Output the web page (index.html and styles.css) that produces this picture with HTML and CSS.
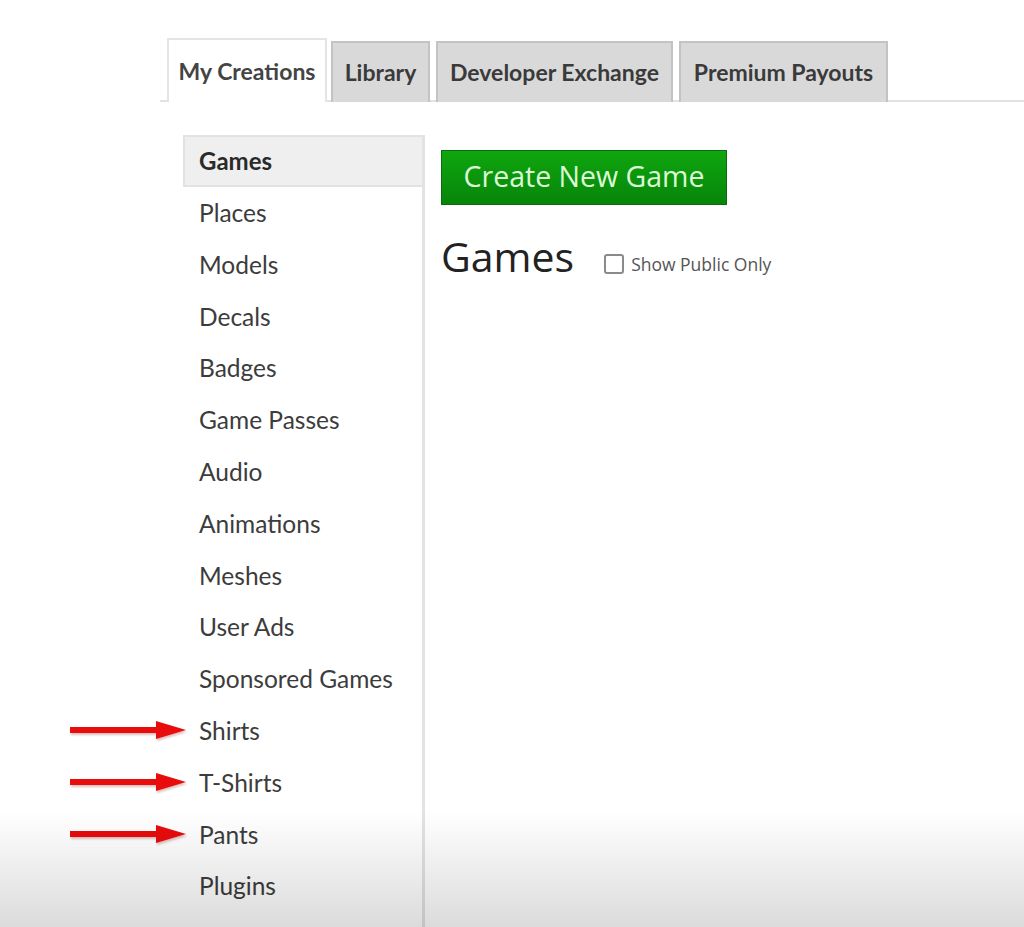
FILE: index.html
```html
<!DOCTYPE html>
<html lang="en">
<head>
    <meta charset="UTF-8">
    <title>Create</title>
    <link rel="stylesheet" href="styles.css">
</head>
<body>
    <div class="page">
        <ul class="tabs">
            <li class="tab active">My Creations</li>
            <li class="tab tab-library">Library</li>
            <li class="tab tab-devex">Developer Exchange</li>
            <li class="tab tab-payouts">Premium Payouts</li>
        </ul>

        <div class="main">
            <ul class="sidebar">
                <li class="selected">Games</li>
                <li>Places</li>
                <li>Models</li>
                <li>Decals</li>
                <li>Badges</li>
                <li>Game Passes</li>
                <li>Audio</li>
                <li>Animations</li>
                <li>Meshes</li>
                <li>User Ads</li>
                <li>Sponsored Games</li>
                <li class="marked">Shirts
                    <svg class="arrow" width="124" height="22" viewBox="0 0 124 22"><path d="M4 8 H90 V2 L120 11 L90 20 V14 H4 Z" fill="#e80c0c"/></svg>
                </li>
                <li class="marked">T-Shirts
                    <svg class="arrow" width="124" height="22" viewBox="0 0 124 22"><path d="M4 8 H90 V2 L120 11 L90 20 V14 H4 Z" fill="#e80c0c"/></svg>
                </li>
                <li class="marked">Pants
                    <svg class="arrow" width="124" height="22" viewBox="0 0 124 22"><path d="M4 8 H90 V2 L120 11 L90 20 V14 H4 Z" fill="#e80c0c"/></svg>
                </li>
                <li>Plugins</li>
            </ul>

            <section class="content">
                <button class="create-btn">Create New Game</button>
                <div class="heading-row">
                    <h1>Games</h1>
                    <label class="public-only"><span class="box"></span>Show Public Only</label>
                </div>
            </section>
        </div>
    </div>
    <div class="fade"></div>
</body>
</html>
```

FILE: styles.css
```css
body {
    margin: 0;
    background: #fff;
    color: #333;
    font-family: Lato, "Open Sans", sans-serif;
    overflow: hidden;
}

.page {
    padding-top: 38px;
}

.tabs {
    list-style: none;
    margin: 0 0 0 160px;
    padding: 0;
    display: flex;
    align-items: flex-end;
    height: 62px;
    border-bottom: 2px solid #e2e2e2;
}

.tab {
    box-sizing: border-box;
    height: 61px;
    margin-bottom: -2px;
    padding-bottom: 2px;
    background: #d9d9d9;
    border: 2px solid #c3c3c3;
    border-bottom: none;
    font-size: 23px;
    font-weight: bold;
    color: #3a3a3a;
    display: flex;
    align-items: center;
    justify-content: center;
}

.tab.active {
    height: 64px;
    width: 160px;
    margin-left: 7px;
    padding-bottom: 0;
    background: #fff;
    border-color: #e4e4e4;
    color: #444;
}

.tab-library {
    width: 99px;
    margin-left: 4px;
}

.tab-devex {
    width: 237px;
    margin-left: 6px;
}

.tab-payouts {
    width: 209px;
    margin-left: 6px;
}

.main {
    display: flex;
    margin-top: 33px;
}

.sidebar {
    list-style: none;
    margin: 0 0 0 183px;
    padding: 0;
    width: 239px;
    min-height: 800px;
    border-right: 3px solid #e3e3e3;
}

.sidebar li {
    position: relative;
    height: 51.8px;
    line-height: 51px;
    padding-left: 16px;
    font-size: 24.5px;
    color: #3c3c3c;
}

.sidebar li.selected {
    box-sizing: border-box;
    height: 52px;
    line-height: 48px;
    background: #efefef;
    border: 2px solid #e2e2e2;
    border-right: none;
    padding-left: 14px;
    color: #2a2a2a;
    font-weight: bold;
    font-size: 24px;
}

.arrow {
    position: absolute;
    left: -117px;
    top: 14px;
    filter: drop-shadow(1px 2px 1px rgba(120, 0, 0, 0.25));
}

.content {
    padding: 15px 0 0 16px;
}

.create-btn {
    display: block;
    width: 286px;
    height: 55px;
    border: 1px solid #0b6d0b;
    background: linear-gradient(#0fa60f, #07850a);
    color: #dcf9d6;
    font-family: "Open Sans", sans-serif;
    font-size: 28.5px;
    font-weight: 500;
    padding: 0 0 3px;
}

.heading-row {
    display: flex;
    align-items: baseline;
    margin-top: 26px;
}

h1 {
    margin: 0;
    font-family: "Open Sans", sans-serif;
    font-weight: normal;
    font-size: 41px;
    color: #222;
    line-height: 50px;
}

.public-only {
    display: flex;
    align-items: center;
    margin-left: 30px;
    font-family: "Open Sans", sans-serif;
    font-size: 17.5px;
    color: #555;
    position: relative;
    top: 2px;
}

.public-only .box {
    box-sizing: border-box;
    width: 20px;
    height: 20px;
    border: 2px solid #8a8a8a;
    border-radius: 3px;
    margin-right: 7px;
    background: #fff;
}

.fade {
    position: fixed;
    left: 0;
    right: 0;
    bottom: 0;
    height: 115px;
    background: linear-gradient(rgba(0, 0, 0, 0), rgba(0, 0, 0, 0.14));
    pointer-events: none;
}
```
